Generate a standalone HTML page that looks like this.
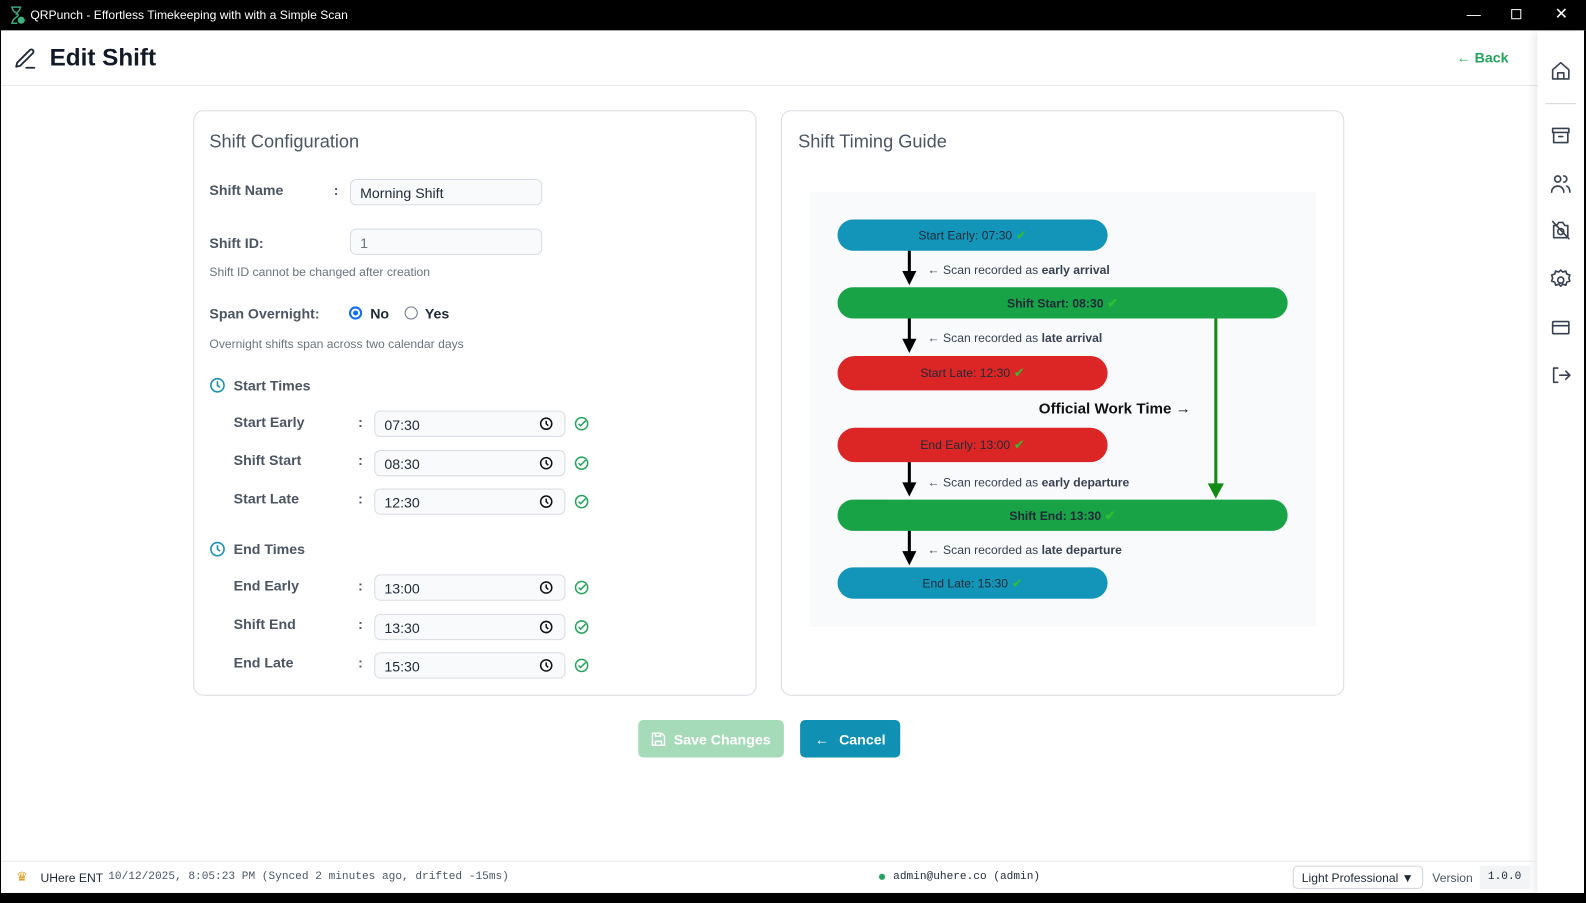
<!DOCTYPE html>
<html><head><meta charset="utf-8"><style>
*{box-sizing:border-box;margin:0;padding:0}
body{width:1586px;height:893px;background:#000;position:relative;overflow:hidden;font-family:"Liberation Sans",sans-serif;color:#1f2937}
#w{position:absolute;left:0;top:0;width:1568px;height:883px;transform:scale(1.0115,1.0113);transform-origin:0 0}
.a{position:absolute}
.win{left:1px;top:30px;width:1584px;height:853px;background:#fff}
.lbl{font-size:14px;font-weight:bold;color:#4b5563}
.inp{border:1px solid #d8dce2;border-radius:6px;background:#f9fafb;font-size:14px;color:#1f2937;padding:5px 9px;height:26px}
.hint{font-size:12px;color:#6b7280}
.pill{border-radius:17px;font-size:12px;color:#1f2937;text-align:center;display:flex;align-items:center;justify-content:center}
.note{font-size:12px;color:#374151}
.card{border:1px solid #d8dce2;border-radius:10px;background:#fff}
.ck{color:#2fbf2f;font-size:13px}
</style></head><body><div id="w">
<div class="a" style="left:0;top:0;width:1586px;height:30px;background:#000"></div>
<svg class="a" style="left:9px;top:6px" width="16" height="18" viewBox="0 0 16 18"><path d="M2 1h10M2 17h6M3 1c0 5 6 6 6 8s-6 3-6 8M11 1c0 4-4 5-4 8" stroke="#3fa679" stroke-width="1.5" fill="none"/><circle cx="12" cy="14" r="3.5" fill="#3fb27f"/></svg>
<div class="a" style="left:30px;top:8px;font-size:12px;color:#fff">QRPunch - Effortless Timekeeping with with a Simple Scan</div>
<div class="a" style="left:1450px;top:6px;color:#fff;font-size:14px">&#8212;</div>
<div class="a" style="left:1494px;top:9px;width:10px;height:10px;border:1px solid #fff"></div>
<div class="a" style="left:1537px;top:4px;color:#fff;font-size:16px">&#10005;</div>
<div class="a win"></div>
<svg class="a" style="left:13px;top:46px" width="24" height="24" viewBox="0 0 24 24" fill="none" stroke="#1f2937" stroke-width="1.8" stroke-linecap="round" stroke-linejoin="round"><path d="M16.5 3.5a2.1 2.1 0 0 1 3 3L7 19l-4 1 1-4z"/><path d="M13 21h8"/></svg>
<div class="a" style="left:49px;top:44px;font-size:24px;font-weight:bold;color:#111827">Edit Shift</div>
<div class="a" style="left:1440px;top:49px;font-size:14px;font-weight:bold;color:#22a55a">&#8592; Back</div>
<div class="a" style="left:1px;top:84px;width:1519px;height:1px;background:#e5e7eb"></div>
<div class="a" style="left:1520px;top:31px;width:46px;height:852px;background:#fff;box-shadow:-4px 0 8px rgba(0,0,0,.08)"></div>
<div class="a" style="left:1566px;top:30px;width:20px;height:863px;background:#000"></div>
<div class="a" style="left:1528px;top:102px;width:30px;height:1px;background:#d1d5db"></div>
<svg class="a" style="left:1533px;top:60px" width="20" height="340" viewBox="0 0 20 340" fill="none" stroke="#374151" stroke-width="1.6" stroke-linecap="round" stroke-linejoin="round">
<path d="M2 9l8-7 8 7v9H2z M7 18v-6h6v6"/>
<rect x="2" y="67" width="16" height="4"/><path d="M3 71v10h14V71M8 75h4"/>
<circle cx="7" cy="117" r="3"/><path d="M1 130c0-4 3-6 6-6s6 2 6 6M13 114a3 3 0 0 1 0 6M16 124c2 1 3 3 3 6"/>
<path d="M3 163h3l2-3h4l2 3h3v12H3z M2 159l16 17"/><circle cx="10" cy="169" r="3"/>
<circle cx="10" cy="217" r="3"/><path d="M10 207l2 2 3-1 1 3 3 1-1 3 1 3-3 1-1 3-3-1-2 2-2-2-3 1-1-3-3-1 1-3-1-3 3-1 1-3 3 1z"/>
<rect x="2" y="258" width="16" height="12" rx="1"/><path d="M2 262h16"/>
<path d="M7 304H3v14h4M9 311h10M15 307l4 4-4 4"/>
</svg>
<div class="a card" style="left:191px;top:109px;width:557px;height:579px"></div>
<div class="a" style="left:207px;top:130px;font-size:18px;color:#4b5563">Shift Configuration</div>
<div class="a lbl" style="left:207px;top:180px">Shift Name</div>
<div class="a lbl" style="left:330px;top:180px">:</div>
<div class="a inp" style="left:346px;top:177px;width:190px">Morning Shift</div>
<div class="a lbl" style="left:207px;top:232px">Shift ID:</div>
<div class="a inp" style="left:346px;top:226px;width:190px;color:#6b7280">1</div>
<div class="a hint" style="left:207px;top:262px">Shift ID cannot be changed after creation</div>
<div class="a lbl" style="left:207px;top:302px">Span Overnight:</div>
<div class="a" style="left:345px;top:303px;width:13px;height:13px;border-radius:50%;border:2px solid #0d6efd;background:#fff"><div style="margin:2px;width:5px;height:5px;border-radius:50%;background:#0d6efd"></div></div>
<div class="a lbl" style="left:366px;top:302px;color:#1f2937">No</div>
<div class="a" style="left:400px;top:303px;width:13px;height:13px;border-radius:50%;border:1px solid #6b7280"></div>
<div class="a lbl" style="left:420px;top:302px;color:#1f2937">Yes</div>
<div class="a hint" style="left:207px;top:333px">Overnight shifts span across two calendar days</div>
<svg class="a" style="left:207px;top:373px" width="16" height="16" viewBox="0 0 16 16" fill="none" stroke="#1a91b5" stroke-width="1.6"><circle cx="8" cy="8" r="6.5"/><path d="M8 4v4l2.5 2"/></svg>
<div class="a lbl" style="left:231px;top:373px">Start Times</div>
<svg class="a" style="left:207px;top:535px" width="16" height="16" viewBox="0 0 16 16" fill="none" stroke="#1a91b5" stroke-width="1.6"><circle cx="8" cy="8" r="6.5"/><path d="M8 4v4l2.5 2"/></svg>
<div class="a lbl" style="left:231px;top:535px">End Times</div>
<div class="a lbl" style="left:231px;top:409px">Start Early</div><div class="a lbl" style="left:354px;top:409px">:</div><div class="a inp" style="left:370px;top:406px;width:189px">07:30</div>
<div class="a lbl" style="left:231px;top:447px">Shift Start</div><div class="a lbl" style="left:354px;top:447px">:</div><div class="a inp" style="left:370px;top:445px;width:189px">08:30</div>
<div class="a lbl" style="left:231px;top:485px">Start Late</div><div class="a lbl" style="left:354px;top:485px">:</div><div class="a inp" style="left:370px;top:483px;width:189px">12:30</div>
<div class="a lbl" style="left:231px;top:571px">End Early</div><div class="a lbl" style="left:354px;top:571px">:</div><div class="a inp" style="left:370px;top:568px;width:189px">13:00</div>
<div class="a lbl" style="left:231px;top:609px">Shift End</div><div class="a lbl" style="left:354px;top:609px">:</div><div class="a inp" style="left:370px;top:607px;width:189px">13:30</div>
<div class="a lbl" style="left:231px;top:647px">End Late</div><div class="a lbl" style="left:354px;top:647px">:</div><div class="a inp" style="left:370px;top:645px;width:189px">15:30</div>
<svg class="a" style="left:532px;top:411px" width="52" height="256" viewBox="0 0 52 256" fill="none" stroke-width="1.5">
<g stroke="#111"><circle cx="8" cy="8" r="5.5"/><path d="M8 5v3l2 2"/><circle cx="8" cy="47" r="5.5"/><path d="M8 44v3l2 2"/><circle cx="8" cy="85" r="5.5"/><path d="M8 82v3l2 2"/><circle cx="8" cy="170" r="5.5"/><path d="M8 167v3l2 2"/><circle cx="8" cy="209" r="5.5"/><path d="M8 206v3l2 2"/><circle cx="8" cy="247" r="5.5"/><path d="M8 244v3l2 2"/></g>
<g stroke="#22a55a"><circle cx="43" cy="8" r="6"/><path d="M40 8l2 2 5-5"/><circle cx="43" cy="47" r="6"/><path d="M40 47l2 2 5-5"/><circle cx="43" cy="85" r="6"/><path d="M40 85l2 2 5-5"/><circle cx="43" cy="170" r="6"/><path d="M40 170l2 2 5-5"/><circle cx="43" cy="209" r="6"/><path d="M40 209l2 2 5-5"/><circle cx="43" cy="247" r="6"/><path d="M40 247l2 2 5-5"/></g>
</svg>
<div class="a card" style="left:772px;top:109px;width:557px;height:579px"></div>
<div class="a" style="left:789px;top:130px;font-size:18px;color:#4b5563">Shift Timing Guide</div>
<div class="a" style="left:800px;top:190px;width:501px;height:430px;background:#f8fafc"></div>
<div class="a pill" style="left:828px;top:217px;width:267px;height:31px;background:#1295b8">Start Early: 07:30 <span class="ck">&nbsp;&#10004;</span></div>
<div class="a pill" style="left:828px;top:284px;width:445px;height:31px;background:#19a347;font-weight:bold">Shift Start: 08:30 <span class="ck">&nbsp;&#10004;</span></div>
<div class="a pill" style="left:828px;top:352px;width:267px;height:34px;background:#dc2626">Start Late: 12:30 <span class="ck">&nbsp;&#10004;</span></div>
<div class="a pill" style="left:828px;top:423px;width:267px;height:34px;background:#dc2626">End Early: 13:00 <span class="ck">&nbsp;&#10004;</span></div>
<div class="a pill" style="left:828px;top:494px;width:445px;height:31px;background:#19a347;font-weight:bold">Shift End: 13:30 <span class="ck">&nbsp;&#10004;</span></div>
<div class="a pill" style="left:828px;top:561px;width:267px;height:31px;background:#1295b8">End Late: 15:30 <span class="ck">&nbsp;&#10004;</span></div>
<svg class="a" style="left:800px;top:190px" width="501" height="430">
<g stroke="#000" stroke-width="3"><path d="M99 58v22M99 125v22M99 267v22M99 335v22"/></g>
<g fill="#000"><path d="M92 78h14l-7 14z M92 145h14l-7 14z M92 287h14l-7 14z M92 355h14l-7 14z"/></g>
<path d="M402 125v165" stroke="#138a13" stroke-width="3"/><path d="M394 288h16l-8 15z" fill="#138a13"/>
</svg>
<div class="a note" style="left:917px;top:260px">&#8592; Scan recorded as <b>early arrival</b></div>
<div class="a note" style="left:917px;top:327px">&#8592; Scan recorded as <b>late arrival</b></div>
<div class="a note" style="left:917px;top:470px">&#8592; Scan recorded as <b>early departure</b></div>
<div class="a note" style="left:917px;top:537px">&#8592; Scan recorded as <b>late departure</b></div>
<div class="a" style="left:1027px;top:396px;font-size:15px;font-weight:bold;color:#111">Official Work Time &#8594;</div>
<div class="a" style="left:631px;top:712px;width:144px;height:37px;border-radius:5px;background:#a6dbb9;color:#fff;font-size:14px;font-weight:bold;display:flex;align-items:center;justify-content:center;gap:8px"><svg width="14" height="14" viewBox="0 0 14 14" fill="none" stroke="#fff" stroke-width="1.4"><path d="M1 1h9l3 3v9H1z M4 1v3h5V1 M4 13V9h6v4"/></svg>Save Changes</div>
<div class="a" style="left:791px;top:712px;width:99px;height:37px;border-radius:5px;background:#1090b3;color:#fff;font-size:14px;font-weight:bold;display:flex;align-items:center;justify-content:center;gap:10px">&#8592; <span>Cancel</span></div>
<div class="a" style="left:1px;top:851px;width:1519px;height:1px;background:#e5e7eb"></div>
<div class="a" style="left:16px;top:859px;font-size:13px;color:#d99a1e">&#9819;</div>
<div class="a" style="left:40px;top:861px;font-size:12px;color:#1f2937">UHere ENT</div>
<div class="a" style="left:107px;top:861px;font-size:11px;font-family:'Liberation Mono',monospace;color:#4b5563">10/12/2025, 8:05:23 PM (Synced 2 minutes ago, drifted -15ms)</div>
<div class="a" style="left:869px;top:864px;width:6px;height:6px;border-radius:50%;background:#22a55a"></div>
<div class="a" style="left:883px;top:861px;font-size:11px;font-family:'Liberation Mono',monospace;color:#1f2937">admin@uhere.co (admin)</div>
<div class="a" style="left:1278px;top:856px;width:129px;height:23px;border:1px solid #d1d5db;border-radius:5px;font-size:12px;padding:4px 8px;color:#1f2937">Light Professional &#9660;</div>
<div class="a" style="left:1416px;top:861px;font-size:12px;color:#4b5563">Version</div>
<div class="a" style="left:1463px;top:856px;width:50px;height:23px;background:#f3f4f6;font-size:11px;font-family:'Liberation Mono',monospace;padding:5px 8px">1.0.0</div>
</div></body></html>
